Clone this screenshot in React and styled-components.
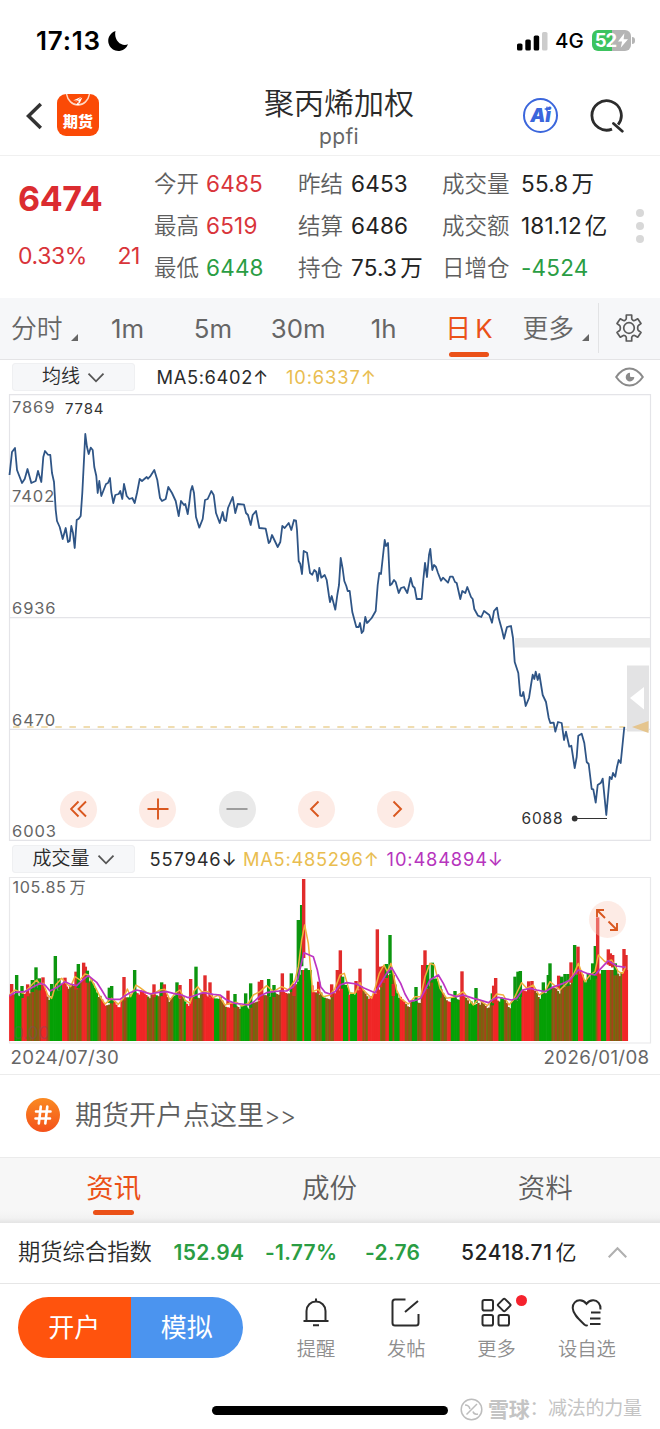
import React from "react";
import styled, { createGlobalStyle } from "styled-components";

const RED = "#d9343a";
const GREEN = "#2a9d43";
const ORANGE = "#eb5118";
const YELLOW = "#e9bd50";
const PURPLE = "#b634bd";

const stats = [
  [["今开", "6485", RED], ["昨结", "6453"], ["成交量", "55.8", null, "万"]],
  [["最高", "6519", RED], ["结算", "6486"], ["成交额", "181.12", null, "亿"]],
  [["最低", "6448", GREEN], ["持仓", "75.3", null, "万"], ["日增仓", "-4524", GREEN]]
];

const pricePoints = `9.5,475 12,452 15,448 17,470 22,483 24.7,479 27.5,469 31.3,483 35.7,481 38,471 41.3,482
43.3,457 45,451 48,454.7 50.3,455 52,473 54,482 55.7,510 57,521 59.7,527 62.7,539 65.7,528 68,542 69.7,541
71.3,526 73,533 74.7,548 76.7,520 78.7,518.7 80.7,516 82.3,493 85.3,434 87,447 88.7,454 90.7,447.7 92.7,450
94.3,467 96.3,476 97.7,493 99.3,481 101.3,496 106,484 108,483 110,478 111.3,492 113.3,503 115.3,495 118.7,494
120.3,491 122.3,499 124,484 126.7,496 129.3,499 132.3,498 134.7,503 137,493 139.7,479 142,481 146.7,477
148,478.7 150,476.7 154.3,470 157.3,480 160,498 162,501 165.7,499 168.3,487 172,493 175.7,501 178.7,516
181,501 184,505 185.3,504 187.7,514 189.3,503 190.7,491 192.3,486 194,493 196,517 199.3,527.7 202.7,519
205,500 207.7,499 211.3,491 213.7,495 216,513 219.7,523 222.7,512 224.3,520 226,521 228,508 232.7,497
235.3,513 237.7,504 244,504.7 246,513 248,515 250.7,525 252.7,515 256,511 259.3,528 265.7,528.7 268.7,543
270,541.7 272,535 277.7,547 280.3,542 282.3,526 284.7,528 288.7,523 291.3,530 294,520 296,520.7 297,530
298.7,561 300.3,564 302,574 303.7,551 307,552.7 310,573 312.3,574.7 314.3,570 316.3,572 317.7,581 319.3,568
321.3,577.7 324.7,575 326.7,580 329,596 330,602 331.7,596 335.3,609.7 337.3,595 339,585 340.7,558 342.7,569
344.3,581 346.3,586 347.7,591 349.7,591 352.3,612 356.3,627 358.7,627 360,623 361.7,633 363.3,631 365.3,617
367,623 369,621 371.7,618 375.7,611 377.7,585 379.3,573 381,574 384.7,540 386,546 388,543 390,585.3 391.7,584
394,580 395.7,582 398.7,593 401,588 404,587 407.3,593 410.7,578 412.7,586 414.7,588 416.7,599 421.7,599
423.3,580 425,563 427,577 429,555 430.3,549 432.3,570 434,565 436,567 438,573 441,580.7 443,577.7 448,582.7
450,576.7 452.7,576.7 455,582 456.7,583 460.3,599 462.3,591 465.3,593 467.3,587 471,597 472.7,599 474.3,609
478,615.7 481.3,617 484,611 489.3,615 492,622.7 494,611 497,607.7 498.7,618 502,630 504,638.7 507,627
511,626 513,638 514.7,662 518.3,673 520.3,695.7 522,696 523.3,692 525.7,706 529,698 531,685 532.7,674.7
534.3,679 535.7,671.7 537.7,680 539.3,674 542.7,695 546,702 548.7,718 550.3,723 553.7,722.7 555.3,731.7
558,722 561.7,723 564,740 566,731.7 569.3,746.7 571.3,745.7 574.7,768 576.7,757 578.3,735.7 581.7,733.7
584.3,743 586.7,762 588.7,764 591.7,789 593.3,789.3 595.7,802.7 597.7,785 601,782.7 602.7,778.7 606.3,815
609.7,777 611.7,779 613,773 615.3,776.7 617,767 618.7,760 620.7,763 622.3,747 624.3,727`;

// Volume data: x in thirds of a pixel, y downwards from the top of the panel header
const ma10 = [
  [28, 468], [45, 457], [75, 455], [100, 440], [122, 430], [135, 435], [150, 453], [175, 440], [195, 425],
  [210, 432], [230, 437], [250, 418], [265, 407], [290, 427], [305, 450], [320, 475], [335, 478], [360, 478],
  [375, 467], [390, 458], [410, 450], [430, 455], [450, 462], [470, 458], [500, 455], [520, 460], [545, 465],
  [565, 473], [580, 468], [610, 458], [640, 463], [660, 465], [680, 480], [705, 490], [725, 492], [745, 495],
  [760, 487], [780, 468], [800, 458], [820, 455], [840, 453], [860, 453], [880, 440], [893, 418], [903, 375],
  [912, 338], [940, 350], [952, 390], [962, 440], [975, 457], [990, 462], [1005, 455], [1020, 435],
  [1040, 428], [1070, 432], [1090, 443], [1125, 458], [1145, 425], [1160, 400], [1175, 383], [1185, 400],
  [1202, 430], [1215, 462], [1228, 485], [1250, 480], [1262, 475], [1275, 450], [1290, 420], [1315, 405],
  [1330, 430], [1345, 462], [1370, 470], [1390, 465], [1420, 475], [1440, 480], [1465, 488], [1480, 478],
  [1495, 472], [1520, 477], [1535, 480], [1550, 475], [1567, 450], [1590, 445], [1610, 450], [1635, 455],
  [1655, 443], [1690, 430], [1710, 420], [1735, 390], [1760, 400], [1785, 405], [1800, 388], [1825, 362],
  [1850, 378], [1877, 382]
];

const ma5 = [
  [28, 465], [45, 450], [70, 460], [90, 440], [110, 420], [120, 433], [130, 430], [143, 465], [155, 475],
  [167, 435], [185, 415], [200, 432], [212, 440], [225, 410], [240, 420], [255, 402], [265, 405], [280, 430],
  [300, 470], [315, 492], [335, 475], [355, 493], [370, 475], [382, 447], [392, 470], [408, 435], [420, 443],
  [440, 458], [460, 462], [480, 450], [495, 448], [510, 480], [525, 460], [540, 450], [555, 480], [570, 490],
  [582, 453], [593, 440], [605, 455], [625, 455], [640, 473], [655, 465], [675, 495], [690, 490], [710, 487],
  [725, 498], [745, 490], [760, 465], [780, 455], [800, 437], [820, 455], [845, 440], [865, 450], [885, 420],
  [895, 380], [905, 300], [914, 255], [925, 310], [938, 455], [955, 448], [970, 470], [990, 465], [1005, 445],
  [1020, 405], [1033, 400], [1050, 460], [1065, 460], [1080, 428], [1090, 450], [1115, 475], [1125, 445],
  [1138, 400], [1152, 375], [1162, 395], [1173, 370], [1190, 450], [1202, 475], [1225, 492], [1245, 470],
  [1262, 470], [1275, 410], [1290, 370], [1303, 375], [1320, 445], [1340, 475], [1365, 470], [1390, 455],
  [1420, 495], [1435, 478], [1462, 497], [1490, 462], [1510, 465], [1527, 495], [1540, 480], [1565, 428],
  [1580, 445], [1600, 435], [1617, 465], [1635, 455], [1650, 425], [1680, 450], [1700, 430], [1720, 405],
  [1735, 370], [1755, 425], [1770, 405], [1785, 395], [1795, 345], [1815, 365], [1835, 360], [1855, 395],
  [1868, 400], [1877, 380]
];

// r = rising day, g = falling day, m = mixed days, too narrow to tell apart
const runs = `28r 45g 66r 78m 122r 140m 150g 186r 200m 245r 260m 270g 290m 305r 320m 340r 365m 385g 410r 440m 465g
475m 485r 500m 518g 535m 550g 560r 578m 610r 640g 660m 680r 700m 722g 750m 775r 788m 805g 815m 845r 858m 890g
906r 915g 935r 945m 965g 975m 1005r 1027g 1043r 1050g 1073r 1085m 1105r 1140m 1155r 1165g 1175m 1185g 1197r
1212m 1235g 1252m 1265r 1280m 1302g 1320m 1340r 1355g 1380r 1395m 1408g 1430m 1477r 1493g 1510m 1535g 1567r
1600m 1620g 1652m 1720g 1732r 1750g 1785m 1790r 1805g 1818r 1830m 1865r`
  .split(/\s+/)
  .map(run => [parseInt(run, 10), run.slice(-1)]);

const spikes = `35:432r 50:405g 66:438g 83:433r 97:420g 108:382g 118:415g 129:412r 155:432g 166:348g 177:415g
195:413r 228:395r 235:372g 251:368r 256:380r 262:392g 328:443g 335:438g 372:411r 404:390g 462:433r 485:427g
493:433r 531:427g 540:435r 572:417r 588:380g 615:406r 630:427r 684:452r 705:462g 737:460g 752:430g 778:425r
785:420r 806:417g 822:435g 847:400r 874:400g 882:432r 895:240g 905:195g 911:117r 918:385g 926:430g 956:425r
995:433r 1012:390r 1021:331r 1028:410g 1068:423r 1080:386r 1132:268r 1142:380r 1150:378r 1159:372g 1170:285g
1180:432r 1248:441g 1268:375r 1275:331r 1283:375g 1297:368g 1308:445g 1320:437g 1365:453g 1386:394r 1428:444g
1477:460g 1481:437r 1487:414r 1545:410g 1554:395g 1561:393g 1586:424r 1596:423r 1630:427g 1645:405g 1650:370g
1676:407r 1685:410g 1695:402g 1704:402g 1713:367r 1724:315g 1734:320r 1765:400g 1778:370g 1786:318g 1793:232r
1812:390g 1825:328r 1831:340r 1838:345r 1846:370g 1872:327r 1878:345r`
  .split(/\s+/)
  .map(spike => {
    const [x, rest] = spike.split(":");
    return { x: Number(x), y: parseInt(rest, 10), kind: rest.slice(-1) };
  });

const barColor = (kind, i) => {
  if (kind === "r") return "#f02626";
  if (kind === "g") return "#05a005";
  return ["#7d6410", "#8f5212", "#6b6f0c", "#a8401a"][(i * 7) % 4];
};

const levelAt = (line, x) => {
  const i = line.findIndex(point => point[0] > x);
  if (i <= 0) return line[i === 0 ? 0 : line.length - 1][1];
  const [x0, y0] = line[i - 1];
  const [x1, y1] = line[i];
  return y0 + ((y1 - y0) * (x - x0)) / (x1 - x0);
};

const bars = Array.from({ length: 350 }, (_, i) => {
  const x = 30 + i * 5.3;
  const kind = runs.filter(run => run[0] <= x).pop() || runs[0];
  const level = Math.max(levelAt(ma10, x), levelAt(ma5, x));
  const noise = ((i * 37) % 17) - 3;
  return {
    x,
    y: Math.min(512, Math.max(level + noise, 390)),
    color: barColor(kind[1], i)
  };
});

const toPoints = line => line.map(([x, y]) => `${x / 3},${y / 3}`).join(" ");

const Chevron = ({ size = 18, color = "#555" }) => (
  <svg width={size} height={size / 1.6} viewBox="0 0 18 11" fill="none" stroke={color} strokeWidth="1.8">
    <path d="M1.5 1.5 9 9.2 16.5 1.5" />
  </svg>
);

const PriceChart = () => (
  <Drawing viewBox="0 394 660 447" height="447">
    <g stroke="#e4e4e8" strokeWidth="1.2" fill="none">
      <path d="M9.5 394.7H650.5V840.4H9.5Z" />
      <path d="M9.5 506H650.5M9.5 617.6H650.5M9.5 729.4H650.5" />
    </g>
    <rect x="515" y="638" width="135" height="9.5" fill="#eaeaea" />
    <path d="M13 727H625" stroke="#ecd296" strokeWidth="1.6" strokeDasharray="6.5 7.6" />
    <rect x="627" y="665.5" width="22" height="66" fill="#e3e3e4" />
    <path d="M630 698 644 687V709.5Z" fill="#fff" />
    <path d="M632 727 648.5 721V733Z" fill="#e5c58e" />
    <g fontFamily="Inter, sans-serif" fontSize="16.5" letterSpacing="0.9" fill="#666">
      <text x="12" y="413">7869</text>
      <text x="12" y="502">7402</text>
      <text x="12" y="613.5">6936</text>
      <text x="12" y="725.5">6470</text>
      <text x="12" y="837">6003</text>
    </g>
    <g fontFamily="Inter, sans-serif" fontSize="15.5" fill="#333">
      <text x="65" y="413.5" fontSize="15" letterSpacing="0.8">7784</text>
      <text x="521.5" y="824" letterSpacing="0.8">6088</text>
    </g>
    <polyline points={pricePoints} fill="none" stroke="#2f5586" strokeWidth="1.8" strokeLinejoin="round" />
    <path d="M575 818.5H607" stroke="#333" strokeWidth="1" />
    <circle cx="574.7" cy="818.5" r="2.9" fill="#333" />
  </Drawing>
);

const VolumeChart = () => (
  <Drawing viewBox="0 37 660 168" height="168">
    <path d="M9.5 37.3H650.5V203H9.5Z" fill="none" stroke="#e8e8ea" strokeWidth="1.2" />
    {bars.map(({ x, y, color }) => (
      <rect key={x} x={x / 3 - 0.9} y={y / 3} width="2.4" height={201 - y / 3} fill={color} />
    ))}
    {spikes.map(({ x, y, kind }) => (
      <rect
        key={x}
        x={x / 3 - 1.7}
        y={y / 3}
        width="3.4"
        height={Math.max(12, levelAt(ma10, x) / 3 + 4 - y / 3)}
        fill={kind === "r" ? "#e12b2b" : "#0c960f"}
      />
    ))}
    <polyline points={toPoints(ma5)} fill="none" stroke="#f0b03c" strokeWidth="1.5" strokeLinejoin="round" />
    <polyline points={toPoints(ma10)} fill="none" stroke="#bd35c4" strokeWidth="1.7" strokeLinejoin="round" />
    <text x="12.5" y="53" fontSize="16.2" fill="#666" fontFamily="Inter, 'Noto Sans CJK SC', sans-serif">
      <tspan letterSpacing="0.6">105.85</tspan>
      <tspan dx="3">万</tspan>
    </text>
    <text x="13" y="199" fontSize="17" fill="#74506a" opacity="0.35" fontFamily="Inter, sans-serif">0.00</text>
  </Drawing>
);

const App = () => (
  <Screen>
    <GlobalStyle />
    <StatusBar>
      <Clock>17:13</Clock>
      <svg width="22" height="22" viewBox="0 0 22 22">
        <path d="M8.5 1A10.2 10.2 0 1 0 21 14.3C14 17 6.5 10 8.5 1Z" />
      </svg>
      <StatusRight>
        <svg width="31" height="20" viewBox="0 0 31 20">
          <rect x="0" y="12.5" width="5.5" height="7" rx="1.6" />
          <rect x="8.3" y="8.5" width="5.5" height="11" rx="1.6" />
          <rect x="16.7" y="4.5" width="5.5" height="15" rx="1.6" />
          <rect x="25" y="1" width="5.5" height="18.5" rx="1.6" fill="#ccc" />
        </svg>
        <Network>4G</Network>
        <Battery>
          52
          <svg width="10" height="15" viewBox="0 0 11 16" fill="#fff">
            <path d="M7 0 0 9H4.5L3 16 11 6.5H6.2Z" />
          </svg>
        </Battery>
        <BatteryTip />
      </StatusRight>
    </StatusBar>

    <Header>
      <svg width="17" height="28" viewBox="0 0 17 28" fill="none" stroke="#333" strokeWidth="3.5">
        <path d="M14.8 2 2.5 14 14.8 26" />
      </svg>
      <AppLogo>
        <svg width="42" height="18" viewBox="0 0 42 18" fill="none">
          <path d="M9.5 0a11.7 13.5 0 0 0 23 0" stroke="#ffd8c4" strokeWidth="1.5" />
          <path d="M16 6.5 24.5 2.8 20.5 6.3ZM17.2 8.5 25.3 3.5 22.5 9.8 21.3 6.5ZM19 11 21.5 7.5 22 11Z" fill="#fff" />
        </svg>
        期货
      </AppLogo>
      <Title>
        聚丙烯加权
        <Code>ppfi</Code>
      </Title>
      <AiBadge>
        Ai
        <svg width="6" height="6" viewBox="0 0 6 6" fill="#3b66dc">
          <path d="M3 0 4 2 6 3 4 4 3 6 2 4 0 3 2 2Z" />
        </svg>
      </AiBadge>
      <svg width="36" height="36" viewBox="0 0 36 36" fill="none" stroke="#2c2c2c" strokeWidth="2.8">
        <path d="M24 31.1A14.7 14.7 0 1 1 30.1 26.6" />
        <path d="M25.5 25.5 34.3 33.2" strokeLinecap="round" />
      </svg>
    </Header>

    <Quote>
      <Latest>
        <Price>6474</Price>
        <Change>
          <span>0.33%</span>
          <span>21</span>
        </Change>
      </Latest>
      <Stats>
        {stats.flat().map(([label, value, color, unit]) => (
          <React.Fragment key={label}>
            <StatLabel>{label}</StatLabel>
            <StatValue $color={color}>
              {value}
              {unit && <Unit>{unit}</Unit>}
            </StatValue>
          </React.Fragment>
        ))}
      </Stats>
      <Dots>
        <Dot />
        <Dot />
        <Dot />
      </Dots>
    </Quote>

    <Periods>
      <Period $width="85px" $start>
        分时<Corner />
      </Period>
      {["1m", "5m", "30m", "1h"].map(name => (
        <Period key={name}>{name}</Period>
      ))}
      <Period $active>
        <span>日 K</span>
      </Period>
      <Period $width="86.5px" $start>
        更多<Corner />
      </Period>
      <Settings>
        <svg width="28" height="28" viewBox="0 0 28 28" fill="none" stroke="#5a5a5a" strokeWidth="1.7" strokeLinejoin="round">
          <path d="M11.3 1h5.4v3.3q0 1.2 1.2 1.9t2.2.1l2.6-1.5 3.3 4.8-2.3 1.6q-1 .8-1 2.1v1.4q0 1.3 1 2.1l2.3 1.6-3.3 4.8-2.6-1.5q-1-.6-2.2.1t-1.2 1.9V27h-5.4v-3.3q0-1.2-1.2-1.9t-2.2-.1l-2.6 1.5L2 18.4l2.3-1.6q1-.8 1-2.1v-1.4q0-1.3-1-2.1L2 9.6l3.3-4.8 2.6 1.5q1 .6 2.2-.1t1.2-1.9Z" />
          <circle cx="14" cy="14" r="5.3" />
        </svg>
      </Settings>
    </Periods>

    <Indicator>
      <Picker>
        均线 <Chevron />
      </Picker>
      <Reading $left="21.5px" $spacing="0.65px">MA5:6402↑</Reading>
      <Reading $left="17px" $color={YELLOW} $spacing="0.9px">10:6337↑</Reading>
      <Eye width="29" height="20" viewBox="0 0 29 20" fill="none" stroke="#8a8a8a" strokeWidth="2">
        <path d="M1.2 10Q7 1.5 14.5 1.5T27.8 10Q22 18.5 14.5 18.5T1.2 10Z" />
        <path d="M15 5.8A4.3 4.3 0 1 0 19.3 10H16Q15 10 15 9Z" fill="#8a8a8a" stroke="none" />
      </Eye>
    </Indicator>
    <Panel>
      <PriceChart />
      <Controls>
        <Round>
          <svg width="18" height="18" viewBox="0 0 18 18">
            <path d="M8.5 1.5 1 9 8.5 16.5M16 1.5 8.5 9l7.5 7.5" />
          </svg>
        </Round>
        <Round>
          <svg width="22" height="22" viewBox="0 0 22 22">
            <path d="M11 .5v21M.5 11h21" />
          </svg>
        </Round>
        <Round $disabled>
          <svg width="22" height="22" viewBox="0 0 22 22">
            <path d="M.5 11h21" />
          </svg>
        </Round>
        <Round>
          <svg width="18" height="18" viewBox="0 0 18 18">
            <path d="M11.5 1.5 4 9l7.5 7.5" />
          </svg>
        </Round>
        <Round>
          <svg width="18" height="18" viewBox="0 0 18 18">
            <path d="M6.5 1.5 14 9l-7.5 7.5" />
          </svg>
        </Round>
      </Controls>
    </Panel>

    <Indicator $tall>
      <Picker>
        成交量 <Chevron />
      </Picker>
      <Reading $left="14.5px" $spacing="0.85px">557946↓</Reading>
      <Reading $left="5.5px" $color={YELLOW} $spacing="0.7px">MA5:485296↑</Reading>
      <Reading $left="7px" $color={PURPLE} $spacing="0.85px">10:484894↓</Reading>
    </Indicator>
    <Panel>
      <VolumeChart />
      <Expand>
        <svg width="22" height="22" viewBox="0 0 22 22">
          <path d="M9 9 1.5 1.5M1 8V1h7M12.5 12.5 20.5 20.5M21 14v7h-7" />
        </svg>
      </Expand>
    </Panel>
    <Dates>
      <span>2024/07/30</span>
      <span>2026/01/08</span>
    </Dates>

    <Promo>
      <Hash>
        <svg width="18" height="20" viewBox="0 0 18 20" fill="none" stroke="#fff" strokeWidth="2.6" strokeLinecap="round">
          <path d="M6.8 1.5 4.8 18.5M13.3 1.5 11.3 18.5M2 6.5H16.5M1.5 13.5H16" />
        </svg>
      </Hash>
      期货开户点这里<Arrows>&gt;&gt;</Arrows>
    </Promo>

    <Sections>
      <Section $active>
        <span>资讯</span>
      </Section>
      <Section>成份</Section>
      <Section>资料</Section>
    </Sections>

    <IndexBar>
      <IndexName>期货综合指数</IndexName>
      <IndexValue $width="91.5px">152.94</IndexValue>
      <IndexValue $width="100px">-1.77%</IndexValue>
      <IndexValue $width="96px">-2.76</IndexValue>
      <IndexValue $dark>
        52418.71<Unit>亿</Unit>
      </IndexValue>
      <Up>
        <Chevron size={21} color="#b0b0b0" />
      </Up>
    </IndexBar>

    <Actions>
      <Pill>
        <PillHalf $color="#ff530d">开户</PillHalf>
        <PillHalf $color="#4b94ef">模拟</PillHalf>
      </Pill>
      <Action>
        <svg width="32" height="32" viewBox="0 0 32 32">
          <path d="M16 1.5v3M6.5 24V14a9.5 9.5 0 0 1 19 0v10M3.5 24h25M13 28.3h6" />
        </svg>
        提醒
      </Action>
      <Action>
        <svg width="32" height="32" viewBox="0 0 32 32">
          <path d="M15.5 2.5H5Q2.5 2.5 2.5 5V26Q2.5 28.5 5 28.5H26q2.5 0 2.5-2.5V17M15 15 28 4" />
        </svg>
        发帖
      </Action>
      <Action>
        <svg width="32" height="32" viewBox="0 0 32 32">
          <rect x="1.5" y="3" width="10.5" height="10.5" rx="1.8" />
          <rect x="1.5" y="18" width="10.5" height="10.5" rx="1.8" />
          <rect x="17.5" y="18" width="10.5" height="10.5" rx="1.8" />
          <path d="M22.3 2.1q.9-.9 1.8 0l5 5q.9.9 0 1.8l-5 5q-.9.9-1.8 0L17.3 8.9q-.9-.9 0-1.8Z" />
        </svg>
        更多
        <Badge />
      </Action>
      <Action>
        <svg width="32" height="32" viewBox="0 0 32 32">
          <path d="M29.5 12.5C30 7.5 26.5 3 22 3.2q-4 .2-6.5 3.6Q13 3.4 9 3.2C5 3 1.5 6.500 1.7 11c.2 6.5 7 12 12 16.7q1.5 1.3 3 .5M20 15.5h9.500M19 21.5h10.5M19 27h10.5" />
        </svg>
        设自选
      </Action>
    </Actions>

    <Footer>
      <HomeIndicator />
      <Watermark>
        <svg width="23" height="23" viewBox="0 0 23 23" fill="none" stroke="#bdbdbd" strokeWidth="1.5">
          <circle cx="11.5" cy="11.5" r="10.3" />
          <path d="M5 7q4 0 5 4M6.5 16.5 17 6M13 13.5q1 3.5 5 2.5" />
        </svg>
        <b>雪球</b>：减法的力量
      </Watermark>
    </Footer>
  </Screen>
);

export default App;

const GlobalStyle = createGlobalStyle`
  body {
    margin: 0;
    background: #fff;
  }
  * {
    box-sizing: border-box;
  }
`;

const Screen = styled.div`
  width: 660px;
  height: 1429px;
  overflow: hidden;
  background: #fff;
  color: #2b2b2b;
  font-family: Inter, "Noto Sans CJK SC", sans-serif;
  font-weight: 400;
  line-height: 1.2;
  white-space: nowrap;
  svg {
    flex: none;
  }
`;

const StatusBar = styled.div`
  height: 76px;
  padding: 5px 25px 0 36px;
  display: flex;
  align-items: center;
`;

const Clock = styled.span`
  width: 71px;
  font-size: 26px;
  font-weight: 600;
  letter-spacing: 0.8px;
  color: #000;
`;

const StatusRight = styled.div`
  margin-left: auto;
  display: flex;
  align-items: center;
`;

const Network = styled.span`
  margin-left: 7px;
  padding-top: 1px;
  width: 37px;
  font-size: 20.5px;
  font-weight: 500;
  color: #000;
`;

const Battery = styled.div`
  width: 39px;
  height: 21px;
  border-radius: 6px;
  background: linear-gradient(to right, #3cc35f 52%, #b5b5b5 52%);
  color: #fff;
  font-size: 18.5px;
  font-weight: 700;
  letter-spacing: -1px;
  display: flex;
  align-items: center;
  justify-content: center;
  gap: 2px;
`;

const BatteryTip = styled.div`
  width: 3px;
  height: 7px;
  margin-left: 1px;
  border-radius: 0 3px 3px 0;
  background: #b5b5b5;
`;

const Header = styled.div`
  height: 80px;
  padding: 0 35px 0 26px;
  border-bottom: 1px solid #f0f0f0;
  display: flex;
  align-items: center;
`;

const AppLogo = styled.div`
  width: 42px;
  height: 42px;
  margin-left: 14px;
  margin-bottom: 1px;
  border-radius: 9px;
  background: #fb4a06;
  color: #fff;
  font-size: 15px;
  font-weight: 900;
  line-height: 20px;
  text-align: center;
  svg {
    display: block;
  }
`;

const Title = styled.div`
  width: 240px;
  margin-left: 120px;
  padding-top: 2px;
  font-size: 30px;
  line-height: 40px;
  font-weight: 350;
  text-align: center;
`;

const Code = styled.div`
  font-size: 21px;
  line-height: 28px;
  font-weight: 400;
  letter-spacing: 0.4px;
  color: #666;
`;

const AiBadge = styled.div`
  position: relative;
  width: 35px;
  height: 35px;
  margin-left: 64px;
  margin-right: 30px;
  border: 2px solid #3b66dc;
  border-radius: 50%;
  color: #3b66dc;
  font-size: 19px;
  line-height: 31px;
  font-weight: 900;
  font-style: italic;
  text-align: center;
  svg {
    position: absolute;
    top: 6px;
    right: 6px;
  }
`;

const Quote = styled.div`
  height: 142px;
  padding-left: 18px;
  display: flex;
`;

const Latest = styled.div`
  width: 136px;
  padding-top: 22px;
  color: ${RED};
`;

const Price = styled.div`
  font-size: 34px;
  line-height: 42px;
  font-weight: 650;
  letter-spacing: -0.4px;
  color: #db2c30;
`;

const Change = styled.div`
  margin-top: 21px;
  padding-right: 14px;
  display: flex;
  justify-content: space-between;
  font-size: 23px;
  line-height: 30px;
  letter-spacing: -0.4px;
`;

const Stats = styled.div`
  padding-top: 6px;
  display: grid;
  grid-template-columns: 52px 92px 53px 91px 79px 109px;
  grid-auto-rows: 42.3px;
  align-items: center;
`;

const StatLabel = styled.span`
  font-size: 22.5px;
  font-weight: 350;
  color: #5e5e5e;
`;

const StatValue = styled.span`
  font-size: 22.5px;
  letter-spacing: 0.2px;
  color: ${props => props.$color || "#222"};
`;

const Unit = styled.span`
  margin-left: 3px;
  font-weight: 400;
`;

const Dots = styled.div`
  margin: 53px 0 0 6px;
  display: flex;
  flex-direction: column;
  gap: 5px;
`;

const Dot = styled.div`
  width: 8px;
  height: 8px;
  border-radius: 50%;
  background: #d8d8d8;
`;

const Periods = styled.div`
  height: 62px;
  background: #f6f7f9;
  border-bottom: 1px solid #e4e4e6;
  display: flex;
  align-items: center;
`;

const Period = styled.div`
  position: relative;
  flex: none;
  width: ${props => props.$width || "85.3px"};
  height: 61px;
  padding-top: 2px;
  padding-left: ${props => (props.$start ? "11px" : "0")};
  display: flex;
  align-items: center;
  justify-content: ${props => (props.$start ? "flex-start" : "center")};
  font-size: 25.8px;
  font-weight: ${props => (props.$start ? 350 : 400)};
  word-spacing: -3px;
  color: ${props => (props.$active ? ORANGE : "#666")};
  span::after {
    content: "";
    position: absolute;
    bottom: 2px;
    left: 22.5px;
    width: 40px;
    height: 5px;
    border-radius: 3px;
    background: ${ORANGE};
  }
`;

const Corner = styled.i`
  margin: 15px 0 0 8px;
  border-left: 7px solid transparent;
  border-bottom: 7px solid #666;
`;

const Settings = styled.div`
  flex: 1;
  height: 50px;
  margin-bottom: 2px;
  border-left: 1px solid #e2e3e5;
  display: flex;
  align-items: center;
  justify-content: center;
`;

const Indicator = styled.div`
  height: ${props => (props.$tall ? "36px" : "34px")};
  padding: 0 16px 0 12px;
  display: flex;
  align-items: center;
`;

const Picker = styled.div`
  width: 123px;
  height: 28px;
  padding-top: 1px;
  border: 1px solid #eff0f2;
  border-radius: 3px;
  background: #f6f7f9;
  display: flex;
  align-items: center;
  justify-content: center;
  gap: 7px;
  font-size: 19px;
  font-weight: 350;
`;

const Reading = styled.span`
  margin-left: ${props => props.$left};
  padding-top: 1px;
  font-size: 18.3px;
  letter-spacing: ${props => props.$spacing};
  color: ${props => props.$color || "#2b2b2b"};
`;

const Eye = styled.svg`
  margin-left: auto;
`;

const Panel = styled.div`
  position: relative;
`;

const Drawing = styled.svg`
  display: block;
  width: 660px;
`;

const Controls = styled.div`
  position: absolute;
  left: 60px;
  bottom: 13.5px;
  display: flex;
  gap: 42.3px;
`;

const Round = styled.div`
  width: 37px;
  height: 37px;
  border-radius: 50%;
  background: ${props => (props.$disabled ? "#e9e9e9" : "#fdebe5")};
  display: flex;
  align-items: center;
  justify-content: center;
  svg {
    fill: none;
    stroke: ${props => (props.$disabled ? "#999" : "#d9571f")};
    stroke-width: 1.9;
  }
`;

const Expand = styled(Round)`
  position: absolute;
  right: 34.5px;
  top: 24px;
  background: rgba(250, 205, 190, 0.4);
`;

const Dates = styled.div`
  height: 30px;
  padding: 0 10.5px 3px;
  border-bottom: 1px solid #ececec;
  display: flex;
  align-items: center;
  justify-content: space-between;
  font-size: 18.7px;
  letter-spacing: 0.35px;
  color: #666;
`;

const Promo = styled.div`
  height: 82px;
  padding-left: 26px;
  display: flex;
  align-items: center;
  font-size: 27px;
  font-weight: 350;
  color: #5e5e5e;
`;

const Arrows = styled.span`
  font-size: 25px;
  font-weight: 350;
  letter-spacing: -0.5px;
`;

const Hash = styled.div`
  width: 34px;
  height: 34px;
  margin-right: 15px;
  margin-bottom: 2px;
  border-radius: 50%;
  background: linear-gradient(#fa8a22, #f4511a);
  display: flex;
  align-items: center;
  justify-content: center;
`;

const Sections = styled.div`
  height: 66px;
  padding: 0 7px 0 6px;
  border-top: 1px solid #ebebeb;
  background: linear-gradient(#f7f7f7 52px, #f2f2f2 60px, #e4e4e4);
  display: flex;
`;

const Section = styled.div`
  position: relative;
  flex: 1;
  line-height: 61px;
  text-align: center;
  font-size: 27.5px;
  font-weight: ${props => (props.$active ? 400 : 350)};
  color: ${props => (props.$active ? ORANGE : "#5e5e5e")};
  span::after {
    content: "";
    position: absolute;
    left: 87px;
    bottom: 8px;
    width: 41px;
    height: 5px;
    border-radius: 3px;
    background: ${ORANGE};
  }
`;

const IndexBar = styled.div`
  height: 61px;
  padding: 0 32px 1px 18px;
  border-bottom: 1px solid #e6e6e6;
  display: flex;
  align-items: center;
  font-size: 21px;
`;

const IndexName = styled.span`
  width: 155.5px;
  font-size: 22.3px;
  font-weight: 350;
`;

const IndexValue = styled.span`
  width: ${props => props.$width || "auto"};
  letter-spacing: ${props => (props.$dark ? "0.55px" : "0.3px")};
  color: ${props => (props.$dark ? "#222" : GREEN)};
  font-weight: ${props => (props.$dark ? 500 : 600)};
`;

const Up = styled.div`
  margin-left: auto;
  display: flex;
  transform: rotate(180deg);
`;

const Actions = styled.div`
  height: 106px;
  padding: 13px 28px 0 18px;
  display: flex;
`;

const Pill = styled.div`
  width: 225px;
  height: 61px;
  margin-right: 28px;
  border-radius: 31px;
  overflow: hidden;
  display: flex;
`;

const PillHalf = styled.div`
  flex: 1;
  background: ${props => props.$color};
  color: #fff;
  font-size: 26px;
  line-height: 62px;
  text-align: center;
`;

const Action = styled.div`
  position: relative;
  flex: 1;
  display: flex;
  flex-direction: column;
  align-items: center;
  font-size: 19.3px;
  font-weight: 350;
  line-height: 40px;
  color: #8e8e8e;
  svg {
    fill: none;
    stroke: #2c2c2c;
    stroke-width: 2;
  }
`;

const Badge = styled.div`
  position: absolute;
  top: -2px;
  left: 64px;
  width: 11px;
  height: 11px;
  border-radius: 50%;
  background: #f5222d;
`;

const Footer = styled.div`
  height: 39px;
  padding: 0 19px 0 212px;
  display: flex;
  align-items: center;
`;

const HomeIndicator = styled.div`
  flex: none;
  width: 236px;
  height: 9px;
  margin-bottom: -2px;
  border-radius: 5px;
  background: #000;
`;

const Watermark = styled.div`
  margin-left: 12px;
  display: flex;
  align-items: center;
  font-size: 19px;
  letter-spacing: -0.3px;
  color: #c4c4c4;
  b {
    margin-left: 5px;
    font-size: 21px;
  }
`;
